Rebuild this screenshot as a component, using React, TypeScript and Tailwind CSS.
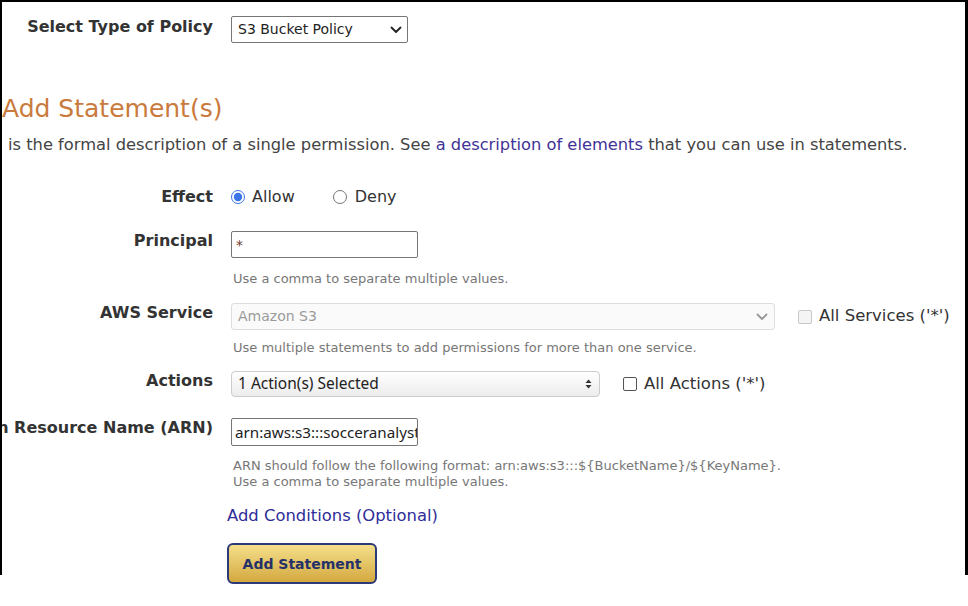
import React from 'react';

const Label: React.FC<{ children: React.ReactNode }> = ({ children }) => (
  <div className="w-[211px] shrink-0 flex justify-end overflow-hidden">
    <span className="whitespace-nowrap font-bold text-[16px] leading-[20px] text-[#333]">{children}</span>
  </div>
);

const Help: React.FC<{ children: React.ReactNode }> = ({ children }) => (
  <p className="pl-[2px] text-[13px] leading-[16px] text-[#777]">{children}</p>
);

const Chevron: React.FC<{ color: string }> = ({ color }) => (
  <svg width="12" height="8" viewBox="0 0 12 8" fill="none">
    <path d="M1.5 1.5 L6 6 L10.5 1.5" stroke={color} strokeWidth="1.8" strokeLinecap="round" strokeLinejoin="round" />
  </svg>
);

export default function App() {
  return (
    <div className="w-[968px] min-h-[606px] bg-white font-['DejaVu_Sans',sans-serif] text-[#333]">
      <div className="h-[575px] overflow-visible border-t-2 border-l-2 border-r-[3px] border-black">
        {/* policy type */}
        <div className="flex gap-[18px] mt-[14px]">
          <div className="pt-[1px]">
            <Label>Select Type of Policy</Label>
          </div>
          <div className="w-[177px] h-[27px] flex items-center justify-between pl-[6px] pr-[5px] border border-[#767676] rounded-[2px]">
            <span className="text-[14px] text-[#222]">S3 Bucket Policy</span>
            <Chevron color="#222" />
          </div>
        </div>

        <h2 className="mt-[49px] text-[25px] leading-[34px] text-[#c97a3c]">Add Statement(s)</h2>

        <p className="mt-[7px] pl-[6px] text-[16.3px] leading-[24px] text-[#444] whitespace-nowrap">
          is the formal description of a single permission. See{' '}
          <a className="text-[#3f3396]">a description of elements</a> that you can use in statements.
        </p>

        {/* effect */}
        <div className="flex gap-[18px] mt-[28px] items-center h-[24px]">
          <Label>Effect</Label>
          <div className="flex items-center text-[16px] text-[#333]">
            <input type="radio" name="effect" defaultChecked className="w-[14px] h-[14px] m-0 accent-[#3a74e8]" />
            <span className="ml-[7px]">Allow</span>
            <input type="radio" name="effect" className="w-[14px] h-[14px] m-0 ml-[38px]" />
            <span className="ml-[8px]">Deny</span>
          </div>
        </div>

        {/* principal */}
        <div className="flex gap-[18px] mt-[22px]">
          <Label>Principal</Label>
          <div>
            <div className="w-[187px] h-[27px] border border-[#767676] rounded-[2px] pl-[4px] text-[14px] leading-[27px] text-[#6e3d30]">*</div>
            <div className="mt-[13px]">
              <Help>Use a comma to separate multiple values.</Help>
            </div>
          </div>
        </div>

        {/* service */}
        <div className="flex gap-[18px] mt-[16px]">
          <Label>AWS Service</Label>
          <div>
            <div className="flex items-center gap-[23px]">
              <div className="w-[544px] h-[27px] flex items-center justify-between pl-[6px] pr-[6px] border border-[#dddddd] bg-[#fafafa] rounded-[3px]">
                <span className="text-[14px] text-[#9a9a9a]">Amazon S3</span>
                <Chevron color="#999" />
              </div>
              <label className="flex items-center text-[16.5px] text-[#333]">
                <span className="w-[14px] h-[14px] border border-[#c8c8c8] bg-[#f4f4f4] rounded-[2px]" />
                <span className="ml-[7px]">All Services ('*')</span>
              </label>
            </div>
            <div className="mt-[10px]">
              <Help>Use multiple statements to add permissions for more than one service.</Help>
            </div>
          </div>
        </div>

        {/* actions */}
        <div className="flex gap-[18px] mt-[15px]">
          <Label>Actions</Label>
          <div className="flex items-center gap-[23px]">
            <div className="w-[369px] h-[26px] flex items-center justify-between pl-[6px] pr-[7px] border border-[#cccccc] rounded-[4px] bg-gradient-to-b from-white to-[#ececec]">
              <span className="text-[15.5px] font-['Noto_Sans',sans-serif] text-[#222]">1 Action(s) Selected</span>
              <svg width="7" height="10" viewBox="0 0 7 10">
                <path d="M3.5 0.5 L6.5 4 H0.5 Z" fill="#333" />
                <path d="M3.5 9.5 L6.5 6 H0.5 Z" fill="#333" />
              </svg>
            </div>
            <label className="flex items-center text-[16.5px] text-[#333]">
              <span className="w-[14px] h-[14px] border border-[#555] bg-white rounded-[2px]" />
              <span className="ml-[7px]">All Actions ('*')</span>
            </label>
          </div>
        </div>

        {/* arn */}
        <div className="flex gap-[18px] mt-[21px]">
          <Label>Amazon Resource Name (ARN)</Label>
          <div>
            <input
              readOnly
              defaultValue="arn:aws:s3:::socceranalyst"
              className="block w-[187px] h-[28px] border border-[#767676] rounded-[2px] pl-[3px] text-[15.2px] font-['Noto_Sans',sans-serif] text-[#222] outline-none"
            />
            <div className="mt-[12px]">
              <Help>ARN should follow the following format: arn:aws:s3:::${'{'}BucketName{'}'}/${'{'}KeyName{'}'}.</Help>
              <Help>Use a comma to separate multiple values.</Help>
            </div>
            <a className="block mt-[14px] -ml-[4px] text-[16.4px] leading-[24px] text-[#2f2d99]">Add Conditions (Optional)</a>
            <button className="relative z-10 block mt-[15px] -ml-[4px] w-[150px] h-[41px] rounded-[6px] border-2 border-[#2d3a78] bg-gradient-to-b from-[#f5df8a] to-[#d3a93e] text-[14px] font-bold text-[#25326a] pt-[2px]">
              Add Statement
            </button>
          </div>
        </div>
      </div>
    </div>
  );
}
